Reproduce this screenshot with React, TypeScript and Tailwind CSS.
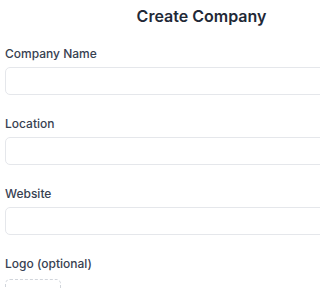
import { Plus } from "lucide-react";

const Field = ({ label }: { label: string }) => {
  return (
    <div className="flex flex-col">
      <label className="mb-[5px] text-[12px] leading-4 font-medium text-[#374151]">{label}</label>
      <input
        type="text"
        className="h-[28px] w-full rounded-[5px] border border-[#e5e7eb] bg-white px-2 text-[12px] outline-none"
      />
    </div>
  );
};

export default function App() {
  return (
    <div className="h-screen w-screen overflow-hidden bg-white font-['Inter',sans-serif]">
      <div className="ml-[5px] w-[393px] pt-1">
        <h1 className="text-center text-[16px] leading-6 font-semibold text-[#1f2937]">Create Company</h1>
        <form className="mt-[18px] flex flex-col gap-[21px]">
          <Field label="Company Name" />
          <Field label="Location" />
          <Field label="Website" />
          <div className="flex flex-col">
            <label className="mb-[7px] text-[12px] leading-4 font-medium text-[#374151]">Logo (optional)</label>
            <div className="flex h-14 w-14 items-center justify-center rounded-[5px] border border-dashed border-[#d1d5db]">
              <Plus className="h-4 w-4 text-[#9ca3af]" />
            </div>
          </div>
        </form>
      </div>
    </div>
  );
}
